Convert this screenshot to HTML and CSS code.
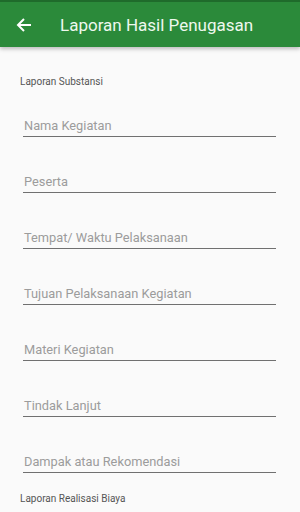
FILE: index.html
```html
<!doctype html>
<html lang="id">
    <head>
        <meta charset="utf-8">
        <title>Laporan Hasil Penugasan</title>
        <link rel="stylesheet" href="styles.css">
    </head>
    <body>
        <div class="appbar">
            <svg class="appbar__back" width="16" height="16" viewBox="0 0 16 16">
                <path d="M15 8H2.5M8 2L2 8l6 6" fill="none" stroke="#fff" stroke-width="2"/>
            </svg>
            <div class="appbar__title">Laporan Hasil Penugasan</div>
        </div>

        <div class="form">
            <div class="form__section">Laporan Substansi</div>
            <div class="form__fields">
                <div class="form__field">Nama Kegiatan</div>
                <div class="form__field">Peserta</div>
                <div class="form__field">Tempat/ Waktu Pelaksanaan</div>
                <div class="form__field">Tujuan Pelaksanaan Kegiatan</div>
                <div class="form__field">Materi Kegiatan</div>
                <div class="form__field">Tindak Lanjut</div>
                <div class="form__field">Dampak atau Rekomendasi</div>
            </div>
            <div class="form__section form__section--next">Laporan Realisasi Biaya</div>
        </div>
    </body>
</html>
```

FILE: styles.css
```css
body {
    background: #fafafa;
    font-family: Roboto, "Noto Sans", sans-serif;
    margin: 0;
}

.appbar {
    align-items: center;
    background: #2b8a3a;
    border-top: 2px solid #1f6b2b;
    box-shadow: 0 2px 4px rgba(0, 0, 0, 0.25);
    box-sizing: border-box;
    display: flex;
    height: 47px;
    padding: 0 16px;
}

.appbar__back {
    flex: none;
}

.appbar__title {
    color: #eef8ee;
    font-size: 17px;
    margin-left: 28px;
}

.form {
    padding: 28px 24px 0 20px;
}

.form__section {
    color: #555;
    font-size: 10px;
    line-height: 14px;
}

.form__section--next {
    margin-top: 19px;
}

.form__fields {
    display: flex;
    flex-direction: column;
    gap: 8px;
    margin-left: 3px;
    padding-top: 29px;
}

.form__field {
    border-bottom: 1px solid #707070;
    color: #9c9c9c;
    font-size: 12.8px;
    line-height: 16px;
    padding: 0 0 2px 1px;
}

.form__field + .form__field {
    padding-top: 29px;
}
```
